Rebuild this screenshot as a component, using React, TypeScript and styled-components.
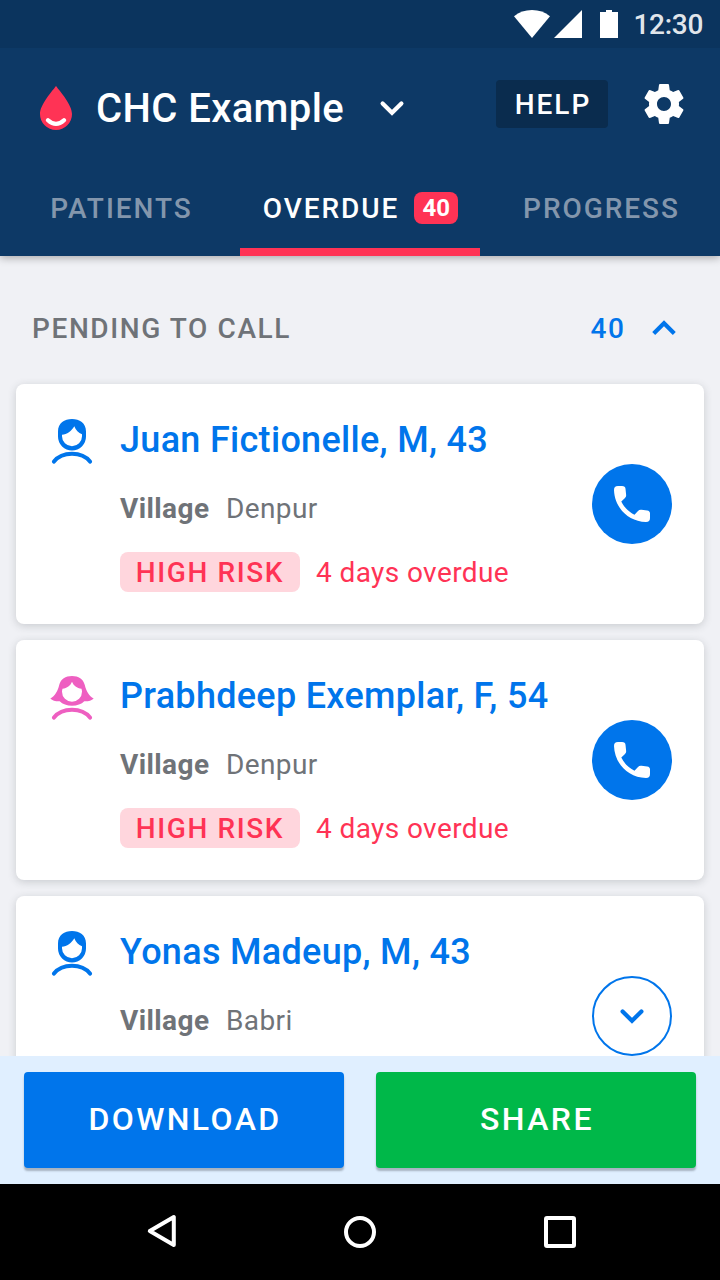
import React from 'react';
import styled, { createGlobalStyle, css } from 'styled-components';

const BLUE = '#0075eb';
const RED = '#ff3355';
const NAVY = '#0d3966';
const GREY = '#6f7378';

const GlobalStyle = createGlobalStyle`
  * { box-sizing: border-box; }
  body { margin: 0; background: #f0f1f5; font-family: Roboto, sans-serif; }
  button { font: inherit; border: 0; padding: 0; background: none; }
  h1, h2, h3, p { margin: 0; }
  svg { display: block; flex: none; }
`;

const Screen = styled.div`
  width: 720px;
  height: 1280px;
  display: flex;
  flex-direction: column;
  overflow: hidden;
  background: #f0f1f5;
`;

const StatusBar = styled.div`
  height: 48px;
  flex: none;
  z-index: 2;
  display: flex;
  align-items: center;
  justify-content: flex-end;
  padding-right: 16px;
  background: #0b345e;
`;

const StatusGlyphs = styled.svg`
  margin-right: 14.5px;
  fill: #fff;
`;

const Clock = styled.span`
  width: 70.5px;
  padding-top: 2px;
  font-size: 28px;
  line-height: 48px;
  font-weight: 500;
  letter-spacing: -0.3px;
  color: rgba(255, 255, 255, 0.9);
  white-space: nowrap;
`;

const Header = styled.header`
  height: 208px;
  flex: none;
  z-index: 1;
  display: flex;
  flex-direction: column;
  background: ${NAVY};
  box-shadow: 0 2px 8px rgba(0, 0, 0, 0.3);
`;

const AppBar = styled.div`
  height: 112px;
  display: flex;
  align-items: center;
  padding: 0 32px 0 40px;
`;

const Facility = styled.h1`
  margin: 10px 32px 0 24px;
  font-size: 40px;
  line-height: 48px;
  font-weight: 500;
  letter-spacing: 0.4px;
  color: #fff;
  white-space: nowrap;
`;

const HelpButton = styled.button`
  width: 112px;
  height: 48px;
  margin: 0 32px 0 auto;
  border-radius: 4px;
  background: #0a2c4e;
  color: #fff;
  font-size: 28px;
  font-weight: 500;
  letter-spacing: 2px;
  text-indent: 2px;
`;

const Tabs = styled.nav`
  height: 96px;
  display: grid;
  grid-template-columns: repeat(3, 1fr);
`;

const Tab = styled.div<{ $active?: boolean }>`
  display: flex;
  align-items: center;
  justify-content: center;
  gap: 15px;
  border-bottom: 8px solid ${(p) => (p.$active ? RED : 'transparent')};
  padding-top: 8px;
  padding-left: ${(p) => (p.$active ? 1 : 3)}px;
  font-size: 28px;
  font-weight: 500;
  letter-spacing: 1.95px;
  color: ${(p) => (p.$active ? '#fff' : '#8396ac')};
`;

const TabCount = styled.span`
  width: 44px;
  height: 32px;
  border-radius: 8px;
  background: ${RED};
  color: #fff;
  font-size: 24px;
  line-height: 32px;
  font-weight: 700;
  letter-spacing: 0;
  text-align: center;
`;

const Content = styled.main`
  flex: 1;
  min-height: 0;
  overflow: hidden;
  display: flex;
  flex-direction: column;
`;

const SectionHeader = styled.div`
  height: 128px;
  flex: none;
  display: flex;
  align-items: center;
  padding: 16px 40px 0 32px;
  font-size: 28px;
  font-weight: 500;
  letter-spacing: 1.6px;
`;

const SectionTitle = styled.h2`
  flex: 1;
  font: inherit;
  color: ${GREY};
`;

const SectionCount = styled.span`
  margin-right: 22.5px;
  color: ${BLUE};
`;

const CardList = styled.div`
  display: flex;
  flex-direction: column;
  gap: 16px;
  padding: 0 16px;
`;

const Card = styled.article`
  height: 240px;
  flex: none;
  display: flex;
  align-items: center;
  padding: 32px;
  border-radius: 8px;
  background: #fff;
  box-shadow: 0 2px 8px rgba(47, 54, 61, 0.2);
`;

const Avatar = styled.div`
  width: 48px;
  margin-right: 24px;
  align-self: flex-start;
`;

const Details = styled.div`
  flex: 1;
  align-self: flex-start;
`;

const Name = styled.h3`
  font-size: 36px;
  line-height: 48px;
  font-weight: 500;
  letter-spacing: 0.3px;
  color: ${BLUE};
  white-space: nowrap;
`;

const Village = styled.p`
  display: flex;
  gap: 16.5px;
  height: 40px;
  margin-top: 24px;
  font-size: 28px;
  line-height: 42px;
  letter-spacing: 0.4px;
  color: ${GREY};
`;

const Label = styled.b`
  font-weight: 700;
`;

const RiskRow = styled.div`
  display: flex;
  gap: 16px;
  height: 40px;
  margin-top: 24px;
  line-height: 42px;
  font-size: 28px;
  color: ${RED};
`;

const RiskTag = styled.span`
  width: 180px;
  border-radius: 8px;
  background: #ffd6dd;
  text-align: center;
  font-weight: 500;
  letter-spacing: 1.6px;
`;

const Overdue = styled.span`
  letter-spacing: 0.4px;
`;

const RoundButton = styled.button<{ $outlined?: boolean }>`
  width: 80px;
  height: 80px;
  flex: none;
  display: flex;
  align-items: center;
  justify-content: center;
  border-radius: 50%;
  ${(p) =>
    p.$outlined
      ? css`
          border: 2px solid ${BLUE};
          color: ${BLUE};
        `
      : css`
          background: ${BLUE};
          color: #fff;
        `}
`;

const ActionBar = styled.div`
  height: 128px;
  flex: none;
  z-index: 1;
  display: grid;
  grid-template-columns: 1fr 1fr;
  gap: 32px;
  padding: 16px 24px;
  background: #e0efff;
`;

const ActionButton = styled.button<{ $color: string }>`
  padding-bottom: 3px;
  border-radius: 4px;
  background: ${(p) => p.$color};
  color: #fff;
  font-size: 32px;
  font-weight: 500;
  letter-spacing: 2.4px;
  text-indent: 2px;
  box-shadow: 0 3px 2px rgba(47, 54, 61, 0.32);
`;

const SystemNav = styled.div`
  height: 96px;
  flex: none;
  display: flex;
  align-items: center;
  justify-content: center;
  gap: 152px;
  background: #000;
`;

const LogoSlot = styled.div`
  padding-top: 8px;
`;

const ChevronSlot = styled.span<{ $light?: boolean }>`
  padding-top: ${(p) => (p.$light ? 7 : 0)}px;
  color: ${(p) => (p.$light ? '#fff' : BLUE)};
`;

const StatusIcons = () => (
  <StatusGlyphs width="106" height="48" viewBox="513 0 106 48">
    <path d="M514 16.200C519 12 525 10 532 10s13 2 18 6.200L532 38z" />
    <path d="M582 10v28h-28z" />
    <path d="M606 10h6v2h6v26h-18V12h6z" />
  </StatusGlyphs>
);

const DropLogo = () => (
  <svg width="32" height="44" viewBox="0 0 32 44">
    <path d="M16 0C20 5.500 32 18.500 32 28A16 16 0 0 1 0 28C0 18.500 12 5.500 16 0z" fill={RED} />
    <path d="M8 34.200Q16 41.600 24 34.200" fill="none" stroke="#fff" strokeWidth="4.2" strokeLinecap="round" />
  </svg>
);

const Chevron = ({ up = false }: { up?: boolean }) => (
  <svg width="32" height="32" viewBox="0 0 32 32" fill="none" stroke="currentColor" strokeWidth="4.2">
    {up ? (
      <path d="M5.700 21.500L16 11.300L26.300 21.500" />
    ) : (
      <path d="M6.600 11.500L16 20.800L25.400 11.500" strokeLinecap="round" />
    )}
  </svg>
);

const GearIcon = () => (
  <svg width="48" height="48" viewBox="0 0 24 24" fill="#fff">
    <path d="M19.43 12.98c.04-.32.07-.64.07-.98s-.03-.66-.07-.98l2.110-1.650c.19-.15.24-.42.12-.64l-2-3.460c-.12-.22-.39-.3-.61-.22l-2.490 1c-.52-.4-1.080-.73-1.690-.98l-.38-2.650C14.460 2.180 14.250 2 14 2h-4c-.25 0-.46.18-.49.42l-.38 2.650c-.61.25-1.170.59-1.690.98l-2.490-1c-.23-.09-.49 0-.61.22l-2 3.460c-.13.22-.07.49.12.64l2.110 1.650c-.04.32-.07.65-.07.98s.03.66.07.98l-2.110 1.650c-.19.15-.24.42-.12.64l2 3.460c.12.22.39.3.61.22l2.490-1c.52.4 1.080.73 1.690.98l.38 2.650c.03.24.24.42.49.42h4c.25 0 .46-.18.49-.42l.38-2.650c.61-.25 1.170-.59 1.690-.98l2.490 1c.23.09.49 0 .61-.22l2-3.460c.12-.22.07-.49-.12-.64l-2.110-1.650zM12 15.500c-1.930 0-3.500-1.570-3.500-3.500s1.570-3.500 3.500-3.500 3.500 1.570 3.500 3.500-1.570 3.500-3.500 3.500z" />
  </svg>
);

const PhoneIcon = () => (
  <svg width="36" height="36" viewBox="0 0 36 36" fill="currentColor">
    <path d="M4 0H8C10.300 0 11.300 1 11.500 2.800L12.100 8.500C12.300 10 12 11 11 12L7.300 15.500C9.800 21 15 26.200 20.500 28.700L24 25C25 24 26 23.600 27.500 23.800L33.200 24.500C35 24.700 36 25.700 36 27.500V32C36 34.800 34.800 36 32 36C13.500 35.500 .5 21 0 4C0 1.200 1.200 0 4 0z" />
  </svg>
);

const Shoulders = () => (
  <path d="M6 45.600C10 40.500 16.500 37.800 24 37.800S38 40.500 42 45.600" fill="none" stroke="currentColor" strokeWidth="4" strokeLinecap="round" />
);

const MaleIcon = () => (
  <svg width="48" height="48" viewBox="0 0 48 48" color={BLUE} fill="currentColor">
    <path
      fillRule="evenodd"
      d="M24 3C31.500 3 38 7 38 15.500V20.500A14 14 0 0 1 10 20.500V15.500C10 7 16.500 3 24 3zM14 18.700V20.300A10 10 0 0 0 34 20.300V18.200C30.500 17 27.800 14.200 26.300 10.200C23.500 15 19 18.300 14 18.700z"
    />
    <Shoulders />
  </svg>
);

const FemaleIcon = () => (
  <svg width="48" height="48" viewBox="0 0 48 48" color="#ee5fc1" fill="currentColor">
    <path
      fillRule="evenodd"
      d="M24 4C30.500 4 35.300 7 36.800 13C38.200 19 41 24 45.700 26.400C43.500 28.600 40 29.400 36.300 29.200C33.500 32 29 33.700 24 33.700S14.500 32 11.700 29.200C8 29.400 4.500 28.600 2.300 26.400C7 24 9.800 19 11.200 13C12.700 7 17.500 4 24 4zM24 9.700C22.500 13.500 19 16.200 14.500 16.700C14.100 18 14 19 14 19.700A10 10 0 0 0 34 19.700C34 19 33.900 18 33.500 16.700C29 16.200 25.500 13.500 24 9.700z"
    />
    <Shoulders />
  </svg>
);

const NavIcon = ({ children }: { children: React.ReactNode }) => (
  <svg width="48" height="48" viewBox="0 0 48 48" fill="none" stroke="#fff" strokeWidth="4" strokeLinejoin="round">
    {children}
  </svg>
);

type Patient = { name: string; female?: boolean; village: string; collapsed?: boolean };

const patients: Patient[] = [
  { name: 'Juan Fictionelle, M, 43', village: 'Denpur' },
  { name: 'Prabhdeep Exemplar, F, 54', female: true, village: 'Denpur' },
  { name: 'Yonas Madeup, M, 43', village: 'Babri', collapsed: true },
];

const PatientCard = ({ name, female, village, collapsed }: Patient) => (
  <Card>
    <Avatar>{female ? <FemaleIcon /> : <MaleIcon />}</Avatar>
    <Details>
      <Name>{name}</Name>
      <Village>
        <Label>Village</Label>
        <span>{village}</span>
      </Village>
      {!collapsed && (
        <RiskRow>
          <RiskTag>HIGH RISK</RiskTag>
          <Overdue>4 days overdue</Overdue>
        </RiskRow>
      )}
    </Details>
    <RoundButton $outlined={collapsed}>{collapsed ? <Chevron /> : <PhoneIcon />}</RoundButton>
  </Card>
);

export default function App() {
  return (
    <Screen>
      <GlobalStyle />
      <StatusBar>
        <StatusIcons />
        <Clock>12:30</Clock>
      </StatusBar>
      <Header>
        <AppBar>
          <LogoSlot>
            <DropLogo />
          </LogoSlot>
          <Facility>CHC Example</Facility>
          <ChevronSlot $light>
            <Chevron />
          </ChevronSlot>
          <HelpButton>HELP</HelpButton>
          <GearIcon />
        </AppBar>
        <Tabs>
          <Tab>PATIENTS</Tab>
          <Tab $active>
            OVERDUE<TabCount>40</TabCount>
          </Tab>
          <Tab>PROGRESS</Tab>
        </Tabs>
      </Header>
      <Content>
        <SectionHeader>
          <SectionTitle>PENDING TO CALL</SectionTitle>
          <SectionCount>40</SectionCount>
          <ChevronSlot>
            <Chevron up />
          </ChevronSlot>
        </SectionHeader>
        <CardList>
          {patients.map((p) => (
            <PatientCard key={p.name} {...p} />
          ))}
        </CardList>
      </Content>
      <ActionBar>
        <ActionButton $color={BLUE}>DOWNLOAD</ActionButton>
        <ActionButton $color="#00b849">SHARE</ActionButton>
      </ActionBar>
      <SystemNav>
        <NavIcon>
          <path d="M13.800 23L37.800 9V37z" />
        </NavIcon>
        <NavIcon>
          <circle cx="24" cy="24" r="14" />
        </NavIcon>
        <NavIcon>
          <rect x="10" y="10" width="28" height="28" rx="1" />
        </NavIcon>
      </SystemNav>
    </Screen>
  );
}
